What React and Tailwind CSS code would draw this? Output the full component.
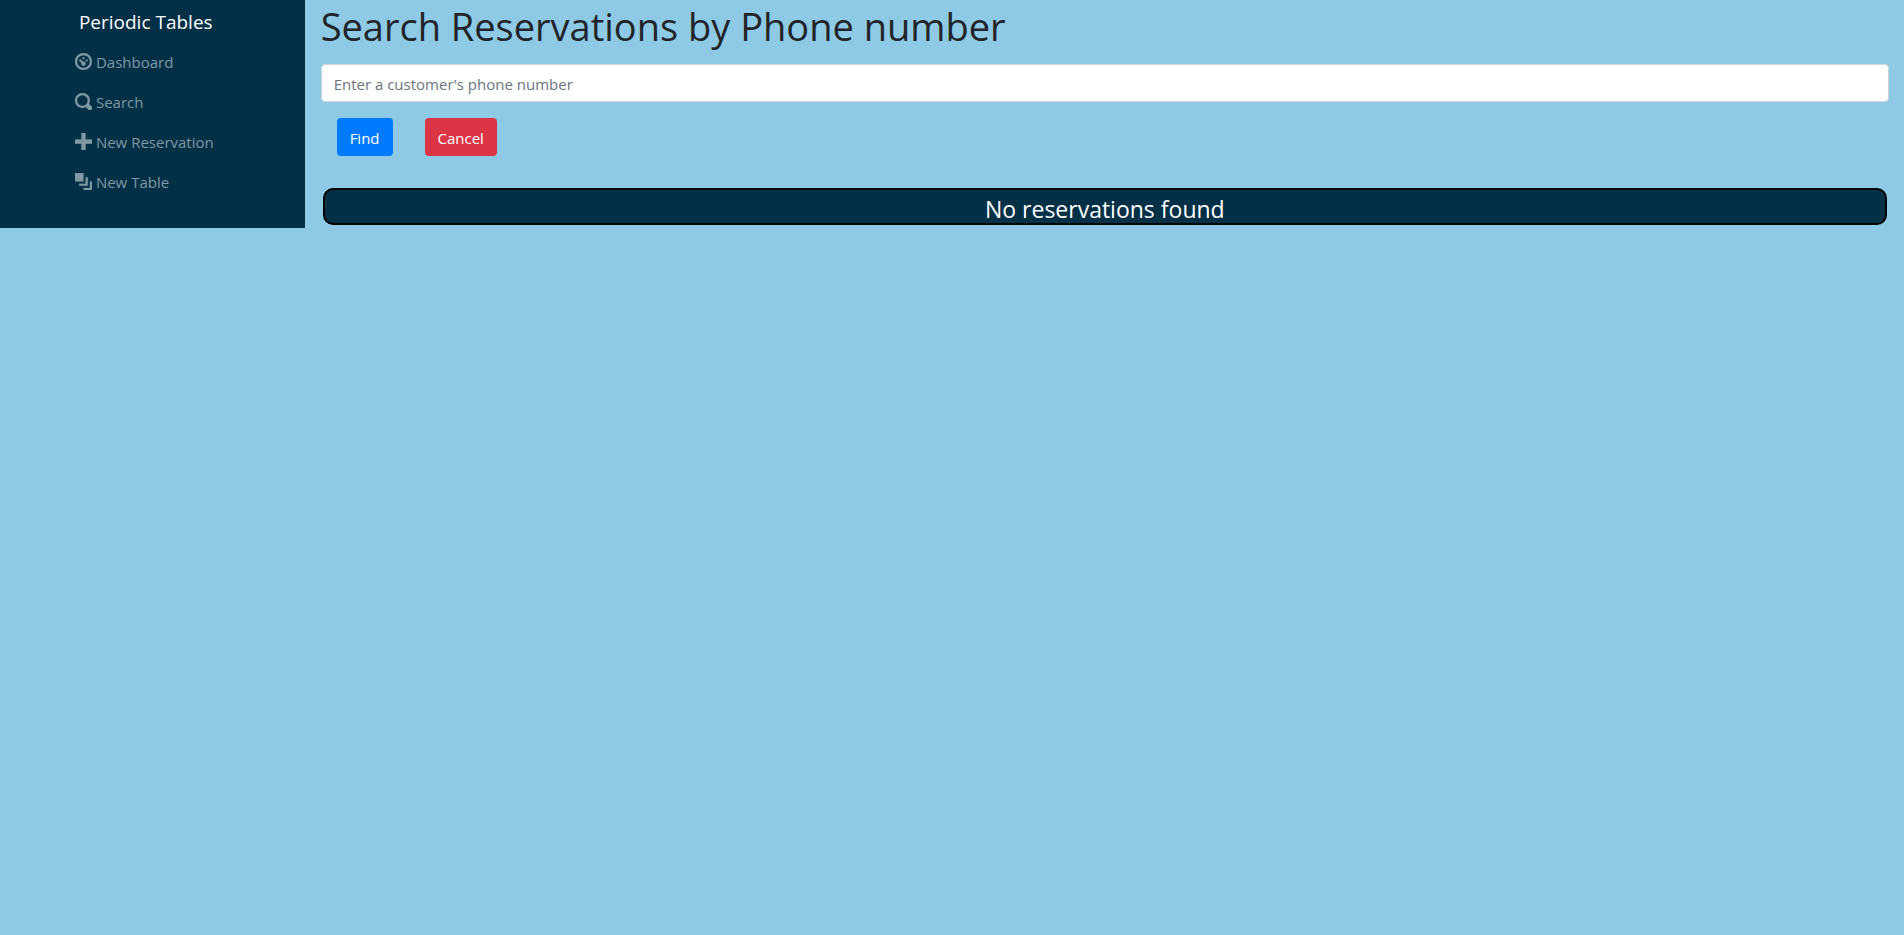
const NAV_ITEMS = [
  {
    label: "Dashboard",
    path: "M4 0c-2.2 0-4 1.8-4 4s1.8 4 4 4 4-1.8 4-4-1.8-4-4-4zm0 1c1.66 0 3 1.34 3 3s-1.34 3-3 3-3-1.34-3-3 1.34-3 3-3zm0 1c-.28 0-.5.22-.5.5s.22.5.5.5.5-.22.5-.5-.22-.5-.5-.5zm-1.66 1a.5.5 0 0 0-.19.84l.91.91c-.02.08-.06.16-.06.25 0 .55.45 1 1 1s1-.45 1-1-.45-1-1-1c-.09 0-.17.04-.25.06l-.91-.91a.5.5 0 0 0-.44-.16.5.5 0 0 0-.06 0zm3.16 0c-.28 0-.5.22-.5.5s.22.5.5.5.5-.22.5-.5-.22-.5-.5-.5z",
  },
  {
    label: "Search",
    path: "M3.5 0c-1.93 0-3.5 1.57-3.5 3.5s1.57 3.5 3.5 3.5c.59 0 1.17-.14 1.66-.41a1 1 0 0 0 .13.13l1 1a1.02 1.02 0 1 0 1.44-1.44l-1-1a1 1 0 0 0-.16-.13c.27-.49.44-1.06.44-1.66 0-1.93-1.55-3.5-3.5-3.5zm0 1c1.39 0 2.5 1.11 2.5 2.5 0 .66-.24 1.27-.66 1.72-.01.01-.02.02-.03.03a1 1 0 0 0-.13.13c-.44.4-1.04.63-1.69.63-1.39 0-2.5-1.11-2.5-2.5s1.11-2.5 2.5-2.5z",
  },
  { label: "New Reservation", path: "M3 0v3h-3v2h3v3h2v-3h3v-2h-3v-3h-2z" },
  {
    label: "New Table",
    path: "M0 0v4h4v-4h-4zm5 2v3h-3v1h4v-4h-1zm2 2v3h-3v1h4v-4h-1z",
  },
];

function Sidebar() {
  return (
    <nav className="flex w-[16%] shrink-0 flex-col items-center bg-[#023047] pt-1 pr-4 pb-[26px]">
      <div className="flex flex-col">
        <a href="#home" className="flex h-9 items-center pl-1 text-[19px] text-white">
          Periodic Tables
        </a>
        <ul className="pt-0.5">
          {NAV_ITEMS.map(({ label, path }) => (
            <li key={label}>
              <a href="#nav" className="flex h-10 items-center gap-1 text-[15px] text-[#8198a3]">
                <svg
                  viewBox="0 0 8 8"
                  className="mb-0.5 size-[17px] fill-current stroke-current stroke-[0.1]"
                  aria-hidden="true"
                >
                  <path d={path} />
                </svg>
                <span>{label}</span>
              </a>
            </li>
          ))}
        </ul>
      </div>
    </nav>
  );
}

export default function App() {
  return (
    <div className="min-h-screen bg-[#8ecae6] font-['Open_Sans','Noto_Sans',sans-serif] text-[#212529]">
      <div className="flex items-start">
        <Sidebar />
        <main className="min-w-0 flex-1 pr-[15px] pl-4">
          <form onSubmit={(e) => e.preventDefault()}>
            <h1 className="pt-0.5 text-[38px] leading-12">
              <label htmlFor="phone">Search Reservations by Phone number</label>
            </h1>
            <input
              id="phone"
              type="text"
              placeholder="Enter a customer's phone number"
              className="mt-[14px] block h-[38px] w-full rounded border border-[#ced4da] bg-white px-3 pt-0.5 text-[15px] placeholder:text-[#6c757d]"
            />
            <div className="flex gap-8 px-4 pt-4">
              <button type="submit" className="h-[38px] rounded bg-[#007bff] px-[13px] pt-0.5 text-[15px] text-white">
                Find
              </button>
              <button type="button" className="h-[38px] rounded bg-[#dc3545] px-[13px] pt-0.5 text-[15px] text-white">
                Cancel
              </button>
            </div>
          </form>
          <h2 className="mx-[2px] mt-8 rounded-[10px] border-2 border-black bg-[#023047] pt-[5px] text-center text-[23px] leading-7 text-white">
            No reservations found
          </h2>
        </main>
      </div>
    </div>
  );
}
